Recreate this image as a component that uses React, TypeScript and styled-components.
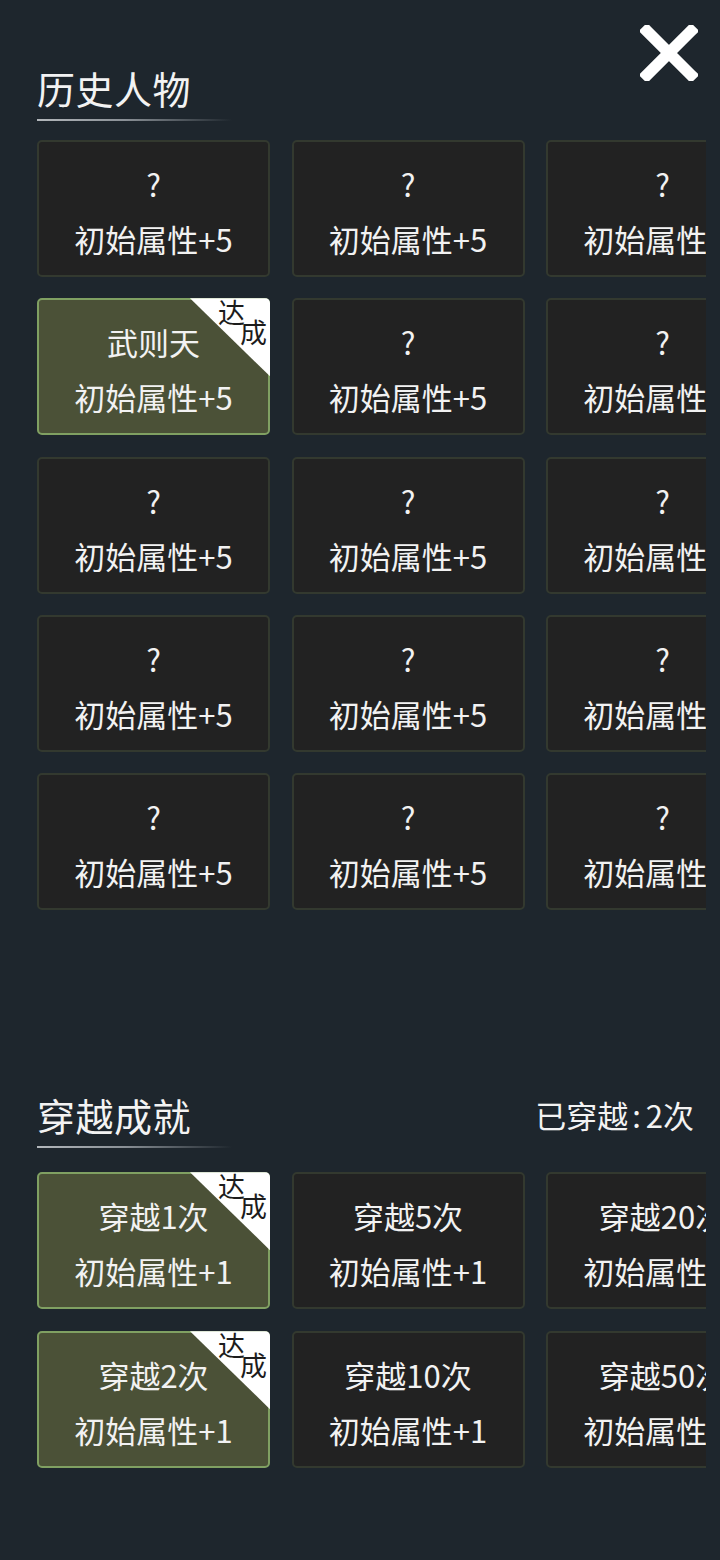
import React from "react";
import styled, { createGlobalStyle, css } from "styled-components";

const GlobalStyle = createGlobalStyle`
  html, body {
    margin: 0;
    padding: 0;
    background: #1e262d;
  }
  body {
    font-family: "Noto Sans CJK SC", "Noto Sans", sans-serif;
    color: #f2f2f2;
  }
`;

const Page = styled.div`
  position: relative;
  width: 720px;
  height: 1560px;
  overflow: hidden;
  background: #1e262d;
`;

const CloseButton = styled.button`
  position: absolute;
  top: 25px;
  right: 22px;
  width: 58px;
  height: 56px;
  padding: 0;
  border: none;
  background: transparent;
  display: flex;
  align-items: center;
  justify-content: center;
`;

const Section = styled.section<{ $top: number }>`
  margin-top: ${(p) => p.$top}px;
  margin-left: 37px;
  width: 669px;
`;

const HeaderRow = styled.div`
  display: flex;
  align-items: flex-start;
  justify-content: space-between;
`;

const TitleBlock = styled.div`
  display: flex;
  flex-direction: column;
`;

const Title = styled.h2`
  margin: 0;
  font-size: 38px;
  line-height: 40px;
  font-weight: 400;
  color: #f3f3f3;
  letter-spacing: 0.5px;
`;

const Underline = styled.div`
  margin-top: 11px;
  width: 195px;
  height: 2px;
  background: linear-gradient(90deg, #b3b7bb 0%, #8a9096 45%, rgba(120, 126, 132, 0) 100%);
`;

const Counter = styled.div`
  margin-right: 12px;
  font-size: 31px;
  line-height: 40px;
  color: #f3f3f3;
  white-space: nowrap;
`;

const Colon = styled.span`
  margin: 0 5px 0 4px;
`;

const Grid = styled.div<{ $gap: number; $rowGap: number }>`
  margin-top: ${(p) => p.$gap}px;
  display: grid;
  grid-template-columns: repeat(3, 233px);
  grid-auto-rows: 137px;
  column-gap: 21.5px;
  row-gap: ${(p) => p.$rowGap}px;
  overflow: hidden;
  width: 669px;
`;

const Card = styled.div<{ $done: boolean }>`
  position: relative;
  box-sizing: border-box;
  width: 233px;
  height: 137px;
  padding-top: 6px;
  border-radius: 5px;
  border: 2px solid #33392f;
  background: #222222;
  display: flex;
  flex-direction: column;
  align-items: center;
  justify-content: center;
  gap: 15px;
  ${(p) =>
    p.$done &&
    css`
      border-color: #80a062;
      background: #4b5137;
    `}
`;

const Line = styled.div`
  font-size: 31px;
  line-height: 40px;
  color: #f2f2f2;
  white-space: nowrap;
`;

const Ribbon = styled.div`
  position: absolute;
  top: -2px;
  right: -2px;
  width: 80px;
  height: 78px;
  background: #ffffff;
  clip-path: polygon(0 0, 100% 0, 100% 100%);
  border-top-right-radius: 5px;
`;

const RibbonChar = styled.span<{ $x: number; $y: number }>`
  position: absolute;
  right: ${(p) => p.$x}px;
  top: ${(p) => p.$y}px;
  font-size: 27px;
  line-height: 28px;
  color: #1c1c1c;
`;

type Item = { name: string; reward: string; done?: boolean };

const history: Item[] = Array.from({ length: 15 }, (_, i) =>
  i === 3 ? { name: "武则天", reward: "初始属性+5", done: true } : { name: "?", reward: "初始属性+5" }
);

const travel: Item[] = [
  { name: "穿越1次", reward: "初始属性+1", done: true },
  { name: "穿越5次", reward: "初始属性+1" },
  { name: "穿越20次", reward: "初始属性+1" },
  { name: "穿越2次", reward: "初始属性+1", done: true },
  { name: "穿越10次", reward: "初始属性+1" },
  { name: "穿越50次", reward: "初始属性+1" },
];

const AchievementCard = ({ item }: { item: Item }) => (
  <Card $done={!!item.done}>
    <Line>{item.name}</Line>
    <Line>{item.reward}</Line>
    {item.done && (
      <Ribbon>
        <RibbonChar $x={25} $y={0}>达</RibbonChar>
        <RibbonChar $x={3} $y={20}>成</RibbonChar>
      </Ribbon>
    )}
  </Card>
);

export default function App() {
  return (
    <Page>
      <GlobalStyle />
      <CloseButton aria-label="关闭">
        <svg width="58" height="56" viewBox="0 0 58 56">
          <path d="M7 6 L51 50 M51 6 L7 50" stroke="#ffffff" strokeWidth="11.5" strokeLinecap="square" />
        </svg>
      </CloseButton>

      <Section $top={68}>
        <TitleBlock>
          <Title>历史人物</Title>
          <Underline />
        </TitleBlock>
        <Grid $gap={19} $rowGap={21.3}>
          {history.map((it, i) => (
            <AchievementCard key={i} item={it} />
          ))}
        </Grid>
      </Section>

      <Section $top={185}>
        <HeaderRow>
          <TitleBlock>
            <Title>穿越成就</Title>
            <Underline />
          </TitleBlock>
          <Counter>
            已穿越<Colon>:</Colon>2次
          </Counter>
        </HeaderRow>
        <Grid $gap={24} $rowGap={22}>
          {travel.map((it, i) => (
            <AchievementCard key={i} item={it} />
          ))}
        </Grid>
      </Section>
    </Page>
  );
}
